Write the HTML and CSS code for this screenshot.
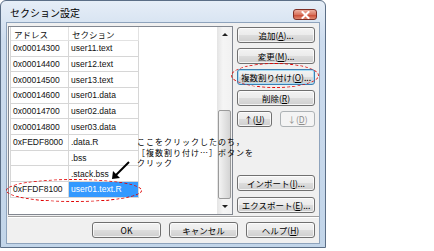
FILE: index.html
```html
<!DOCTYPE html>
<html lang="ja">
<head>
    <meta charset="UTF-8">
    <title>セクション設定</title>
    <link rel="stylesheet" href="styles.css">
</head>
<body>
    <div class="window">
        <div class="titlebar">
            <span class="title">セクション設定</span>
            <span class="close">
                <svg width="9" height="8" viewBox="0 0 9 8">
                    <path d="M1.5 1 L7.5 7 M7.5 1 L1.5 7" stroke="#fff" stroke-width="2" stroke-linecap="square"/>
                </svg>
            </span>
        </div>
        <div class="client">
            <div class="main">
                <div class="listbox">
                    <div class="list-view">
                        <table class="sections">
                            <thead>
                                <tr><th class="col-addr">アドレス</th><th class="col-sec">セクション</th></tr>
                            </thead>
                            <tbody>
                                <tr><td>0x00014300</td><td>user11.text</td></tr>
                                <tr><td>0x00014400</td><td>user12.text</td></tr>
                                <tr><td>0x00014500</td><td>user13.text</td></tr>
                                <tr><td>0x00014600</td><td>user01.data</td></tr>
                                <tr><td>0x00014700</td><td>user02.data</td></tr>
                                <tr><td>0x00014800</td><td>user03.data</td></tr>
                                <tr><td>0xFEDF8000</td><td>.data.R</td></tr>
                                <tr><td></td><td>.bss</td></tr>
                                <tr><td></td><td>.stack.bss</td></tr>
                                <tr><td>0xFFDF8100</td><td class="selected">user01.text.R</td></tr>
                            </tbody>
                        </table>
                    </div>
                    <div class="scrollbar">
                        <div class="sb-btn"><span class="tri-up"></span></div>
                        <div class="sb-track"><div class="sb-thumb"></div></div>
                        <div class="sb-btn"><span class="tri-down"></span></div>
                    </div>
                </div>
                <div class="side-buttons">
                    <button class="btn">追加(<u>A</u>)...</button>
                    <button class="btn">変更(<u>M</u>)...</button>
                    <button class="btn focused">複数割り付け(<u>O</u>)...</button>
                    <button class="btn">削除(<u>R</u>)</button>
                    <div class="move-row">
                        <button class="btn small">↑(<u>U</u>)</button>
                        <button class="btn small" disabled>↓(<u>D</u>)</button>
                    </div>
                    <div class="io">
                        <button class="btn">インポート(<u>I</u>)...</button>
                        <button class="btn">エクスポート(<u>E</u>)...</button>
                    </div>
                </div>
            </div>
            <div class="separator"></div>
            <div class="footer">
                <button class="btn wide">OK</button>
                <button class="btn wide">キャンセル</button>
                <button class="btn wide">ヘルプ(<u>H</u>)</button>
            </div>
        </div>

        <div class="note">ここをクリックしたのち，<br>［複数割り付け…］ボタンを<br>クリック</div>
        <div class="mark mark-button"></div>
        <div class="mark mark-row"></div>
        <svg class="pointer" width="28" height="24" viewBox="0 0 28 24">
            <line x1="21" y1="2" x2="8" y2="15" stroke="#000" stroke-width="2"/>
            <polygon points="4,19 5,11 12,18" fill="#000"/>
        </svg>
    </div>
</body>
</html>
```

FILE: styles.css
```css
body {
    margin: 0;
    background: #fff;
}

.window {
    position: relative;
    width: 326px;
    height: 248px;
    box-sizing: border-box;
    border: 1px solid #5b6e86;
    border-radius: 6px 6px 0 0;
    background: linear-gradient(#e6eef7, #cddcee 40px, #c2d5e9);
    padding: 0 5px 3px;
    display: flex;
    flex-direction: column;
    font-family: "Noto Sans CJK JP", sans-serif;
    color: #000;
}

.titlebar {
    height: 21px;
    display: flex;
    justify-content: space-between;
    align-items: flex-start;
}

.title {
    font-size: 10px;
    line-height: 14px;
    padding: 5px 0 0 4px;
}

.close {
    width: 24px;
    height: 11px;
    box-sizing: border-box;
    margin: 8px 3px 0 0;
    border: 1px solid #7e2f26;
    border-radius: 3px;
    background: linear-gradient(#eeb0a0, #da7560 50%, #c9442e 50%, #e08a72);
    display: flex;
    align-items: center;
    justify-content: center;
}

.client {
    height: 222px;
    box-sizing: border-box;
    border: 1px solid #8ea3bc;
    background: #f0f0f0;
    padding: 3px 4px 5px 1px;
    display: flex;
    flex-direction: column;
}

.main {
    display: flex;
    gap: 4px;
    height: 189px;
}

.listbox {
    width: 225px;
    box-sizing: border-box;
    border: 1px solid #828790;
    background: #fff;
    display: flex;
}

.list-view {
    flex: 1;
    padding-left: 1px;
}

.sections {
    border-collapse: separate;
    border-spacing: 0;
    table-layout: fixed;
    border-left: 1px solid #d6d6d6;
    font-family: "Liberation Sans", "Noto Sans CJK JP", sans-serif;
    font-size: 8.5px;
    color: #111;
}

.sections th,
.sections td {
    box-sizing: border-box;
    padding: 0 0 0 2px;
    border-right: 1px solid #d6d6d6;
    border-bottom: 1px solid #d6d6d6;
    text-align: left;
    white-space: nowrap;
    vertical-align: middle;
}

.sections th {
    height: 14px;
    font-family: "Noto Sans CJK JP", sans-serif;
    font-weight: normal;
    font-size: 8.5px;
    padding-left: 3px;
    border-bottom-color: #e2e2e2;
    border-right-color: #e2e2e2;
}

.col-addr {
    width: 58px;
}

.col-sec {
    width: 70px;
}

.sections td {
    height: 15.67px;
    line-height: 10px;
}

.sections td.selected {
    background: #3399ff;
    color: #fff;
}

.scrollbar {
    width: 15px;
    display: flex;
    flex-direction: column;
    background: linear-gradient(to right, #e4e4e4, #f5f5f5 40%, #f1f1f1);
}

.sb-btn {
    height: 15px;
    display: flex;
    align-items: center;
    justify-content: center;
}

.tri-up,
.tri-down {
    width: 0;
    height: 0;
    border-left: 3px solid transparent;
    border-right: 3px solid transparent;
}

.tri-up {
    border-bottom: 3px solid #222;
}

.tri-down {
    border-top: 3px solid #222;
}

.sb-track {
    flex: 1;
    display: flex;
    flex-direction: column;
    justify-content: flex-end;
    padding: 0 1px;
}

.sb-thumb {
    height: 89px;
    box-sizing: border-box;
    border: 1px solid #9a9a9a;
    border-radius: 2px;
    background: linear-gradient(to right, #f3f3f3, #e3e3e3 50%, #d4d4d4);
}

.side-buttons {
    width: 78px;
    box-sizing: border-box;
    padding: 1px 0 2px;
    display: flex;
    flex-direction: column;
    gap: 5px;
}

.btn {
    height: 16px;
    box-sizing: border-box;
    padding: 0;
    border: 1px solid #707070;
    border-radius: 3px;
    background: linear-gradient(#f3f3f3, #ebebeb 50%, #dddddd 50%, #cfcfcf);
    box-shadow: inset 0 0 0 1px rgba(255, 255, 255, 0.75);
    font-family: "Noto Sans CJK JP", sans-serif;
    font-size: 8.5px;
    line-height: 13px;
    color: #000;
    white-space: nowrap;
}

.btn.focused {
    border-color: #3c7fb1;
    box-shadow: inset 0 0 0 1px #a8dcf5;
}

.btn:disabled {
    border-color: #adb2b5;
    background: #f4f4f4;
    color: #8d8d8d;
    box-shadow: none;
}

.move-row {
    display: flex;
    justify-content: space-between;
}

.btn.small {
    width: 35px;
}

.io {
    margin-top: auto;
    display: flex;
    flex-direction: column;
    gap: 6px;
}

.separator {
    margin: 1px -4px 0 0;
    height: 2px;
    box-sizing: border-box;
    border-top: 1px solid #a0a0a0;
    border-bottom: 1px solid #fff;
}

.footer {
    display: flex;
    justify-content: flex-end;
    gap: 8px;
    padding-top: 4px;
}

.btn.wide {
    width: 69px;
}

.note {
    position: absolute;
    left: 136px;
    top: 136px;
    font-size: 8px;
    line-height: 10.5px;
    letter-spacing: 1px;
    white-space: nowrap;
}

.mark {
    position: absolute;
    box-sizing: border-box;
    border: 1px dashed #e00000;
    border-radius: 50%;
}

.mark-button {
    left: 230px;
    top: 62px;
    width: 88px;
    height: 25px;
}

.mark-row {
    left: 5px;
    top: 178px;
    width: 136px;
    height: 23px;
}

.pointer {
    position: absolute;
    left: 107px;
    top: 159px;
}
```
